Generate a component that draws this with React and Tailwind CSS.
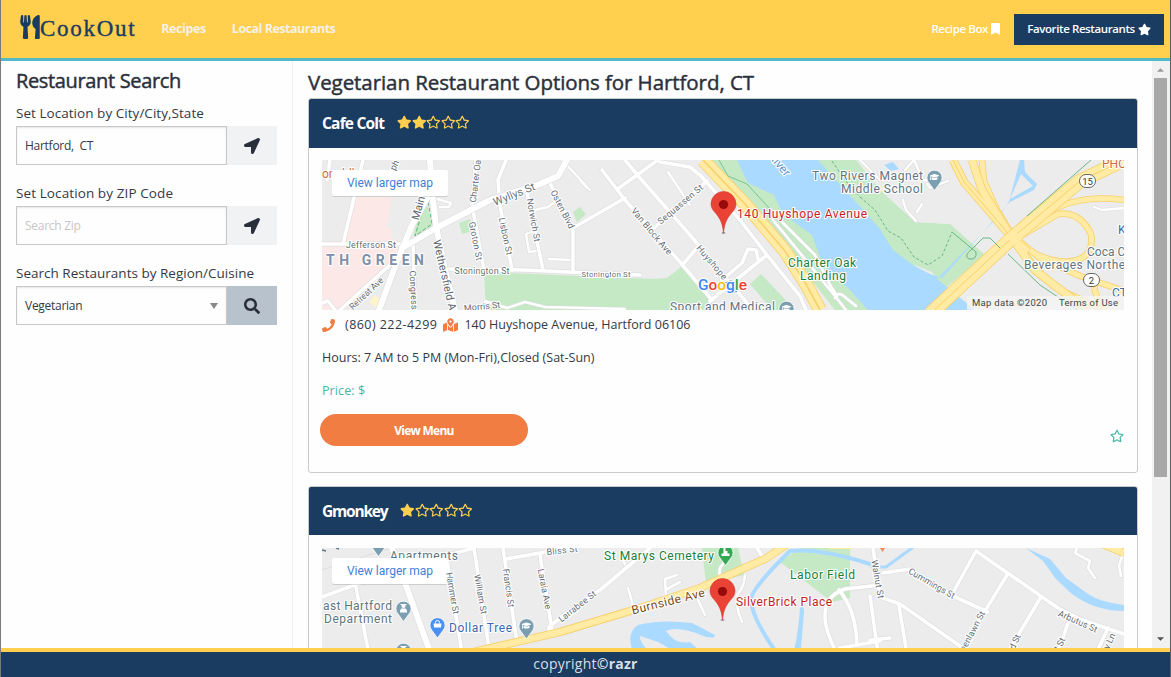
import React from "react";
import {
  FaUtensils, FaBookmark, FaStar, FaRegStar, FaLocationArrow, FaSearch,
  FaPhone, FaMapMarkedAlt, FaGraduationCap,
} from "react-icons/fa";

const W = "#ffffff";

function Roads({ list, width = 4 }) {
  return (
    <g fill="none" strokeLinejoin="round" strokeLinecap="round">
      {list.map((d, i) => <path key={"o" + i} d={d} stroke="#dcdde0" strokeWidth={width + 1.2} />)}
      {list.map((d, i) => <path key={"i" + i} d={d} stroke={W} strokeWidth={width} />)}
    </g>
  );
}

function Highways({ list, width = 6 }) {
  return (
    <g fill="none" strokeLinejoin="round">
      {list.map((d, i) => <path key={"o" + i} d={d} stroke="#f8d06c" strokeWidth={width + 1.6} />)}
      {list.map((d, i) => <path key={"i" + i} d={d} stroke="#ffeba3" strokeWidth={width} />)}
    </g>
  );
}

function Label({ x, y, r = 0, size = 9, fill = "#656d73", w, bold, children, anchor = "middle" }) {
  return (
    <text
      x={x} y={y + 0.5} textAnchor={anchor} fontSize={size} fill={fill}
      fontWeight={bold ? 700 : 400} stroke={W} strokeWidth="2.2" strokeLinejoin="round"
      paintOrder="stroke" textLength={w} transform={`rotate(${r} ${x} ${y})`}
      dominantBaseline="central"
    >
      {children}
    </text>
  );
}

function RedPin({ x, y }) {
  return (
    <g transform={`translate(${x} ${y})`}>
      <ellipse cx="0" cy="0" rx="2" ry="1" fill="#9aa0a6" />
      <path d="M0 0C-1-11-4-15-8-20C-11-23-12.5-26-12.5-29A12.5 12.5 0 0 1 12.5-29C12.5-26 11-23 8-20C4-15 1-11 0 0Z" fill="#ea4335" stroke="#cf3a2d" strokeWidth=".6" />
      <circle cx="0" cy="-28.5" r="4.6" fill="#960a0a" />
    </g>
  );
}

function PlacePin({ x, y, fill = "#7b9eb0", icon }) {
  return (
    <g transform={`translate(${x} ${y})`}>
      <path d="M0 13.5L-5.5 6A7.6 7.6 0 1 1 5.5 6Z" fill={fill} stroke={W} strokeWidth=".8" />
      {icon === "school" && <FaGraduationCap x="-5" y="-5" size={10} color={W} />}
      {icon === "bag" && (
        <g><path d="M-4-1H4L3.5 3H-3.5Z" fill={W} /><path d="M-2-1V-2A2 2 0 0 1 2-2V-1" stroke={W} fill="none" /></g>
      )}
      {icon === "badge" && (
        <g fill={W}><circle cy="-2" r="2.1" /><path d="M-3-4H3V-3H-3ZM-3.6 4.5Q-3.6 0 0 .4Q3.6 0 3.6 4.5Z" /></g>
      )}
      {icon === "grave" && <path d="M-4 4V1.5H-2V-4H0V-1H2V1.5H4V4Z" fill={W} />}
    </g>
  );
}

function HartfordMap() {
  return (
    <svg viewBox="322 160 802 150" className="block h-[150px] w-full" fontFamily="Roboto, sans-serif">
      <rect x="322" y="160" width="802" height="150" fill="#ececec" />
      <path d="M355 197H391L389 218L385 227L392 229V238L400 242L395 262L345 310H322V244H343Z" fill="#fce8e6" />
      <path d="M375 295L383 301L377 309L369 302Z" fill="#fef3c9" />
      <path d="M425 195L432 226L413 237Z" fill="#c5e8c5" />
      <path d="M427 196L432 224L415 236Z" fill="none" stroke="#5bb974" strokeDasharray="4 2" />
      <path d="M459 223L470 219L473 231L462 234ZM573 212L580 207L586 214L577 222Z" fill="#c5e8c5" />
      <path d="M484 272L580 276L656 279L667 278L681 267L710 299L720 310H486Z" fill="#c5e8c5" />
      <path d="M750 284L761 274L795 310H772Z" fill="#c5e8c5" />
      <path d="M706 160H830L856 160L880 190L915 222L950 224L985 255L943 290L932 272L915 265L900 310H835L780 240Z" fill="#c5e8c5" />
      <path d="M868 160L900 207L915 222L950 224L1000 200V160Z" fill="#ececec" />
      <path d="M737 160L748 183L774 195L783 214L812 235L823 265L850 290L868 310H975L953 292L937 279L1000 215L1009 202L1020 160H1024L1025 172L1037 184L1034 190L1010 202L942 278L930 274L913 265L893 250L880 229L866 213L834 178L818 160Z" fill="#aadaff" />
      <path d="M1010 199L1021 174L1033 186Z" fill="#ececec" />
      <path d="M884 165L893 162L899 169L891 171Z" fill="#aadaff" />
      <path d="M860 305L868 310H855Z" fill="#c5e8c5" />
      <Roads width={2.4} list={[
        "M437 199L451 203L449 207H440", "M535 210L548 207L557 200", "M534 231L526 234L529 252L536 251",
        "M549 259L572 260", "M668 172L690 205", "M485 301L507 308L525 302L545 307L625 309",
        "M860 160L880 180", "M905 170L914 160L923 180L938 182", "M948 181L930 188L927 184", "M903 200L906 210L916 221",
        "M922 204L917 212", "M1094 207L1102 210L1124 208", "M562 160L590 190", "M580 180L587 188",
      ]} />
      <Roads width={3.6} list={[
        "M363 160L343 244", "M330 160L327 180", "M322 244H408", "M322 303L328 301L335 310",
        "M476 160L472 205L484 270", "M506 160L498 180L500 205L512 270", "M527 193L543 270",
        "M550 183L573 228V271", "M573 228L625 198", "M447 269L525 270L590 273L640 275",
        "M413 240L415 310", "M391 264L340 310", "M602 170L625 200L680 262L712 300",
        "M619 188L658 160", "M625 160L640 178L690 235L747 303", "M654 228L707 181",
        "M660 162L690 167L701 176L740 220L767 255L800 296L806 310",
        "M767 255L710 301", "M683 264L697 248", "M722 280L742 263L748 249L756 250L758 259",
      ]} />
      <Roads width={2.6} list={[
        "M773 220L800 253L835 296L846 310", "M780 220L815 255L830 285L837 296", "M835 298Q838 290 846 298L856 306",
      ]} />
      <Roads width={6} list={[
        "M430 160L433 200L436 226L445 270L455 310", "M436 182L412 225L396 264L379 310",
        "M402 248L436 228L490 200L540 184L558 176L567 160",
      ]} />
      <path d="M719 160L728 176L747 184L780 220" stroke="#78c590" fill="none" />
      <Highways width={12} list={["M703 160L745 204L785 251L806 284L820 310"]} />
      <path d="M703 160L745 204L785 251L806 284L820 310" stroke="#f8d06c" strokeWidth="1.6" fill="none" />
      <Highways width={5} list={[
        "M982 160L984 181L997 210L1012 235L1035 268L1060 290L1100 308",
        "M1012 241L1058 214Q1080 211 1091 234Q1094 251 1082 258Q1065 267 1035 254",
        "M1012 236L1048 212Q1080 194 1124 200", "M992 258L1018 239", "M1012 235L1040 258L1080 276L1124 291",
        "M1098 276Q1088 287 1105 310",
      ]} />
      <Highways width={7} list={[
        "M953 160L964 182L990 212L1012 238L1035 270L1054 285L1088 310",
        "M972 160L982 190L1012 238L1028 252",
      ]} />
      <Highways width={13} list={["M930 314L1012 238L1080 181L1124 160"]} />
      <path d="M930 314L1012 238L1080 181L1124 160M953 160L964 182L990 212L1012 238" stroke="#f8d06c" fill="none" />
      <path d="M1006 235L1014 230L1023 238L1014 246Z" fill="#ffeba3" />
      <path d="M860 197L875 210L888 231L901 238L914 257L928 265L942 256L952 232" stroke="#69b783" strokeDasharray="3 2" fill="none" />
      <path d="M832 161L845 180L860 197" stroke="#69b783" strokeDasharray="3 2" fill="none" />
      <path d="M952 232L976 252Q977 260 969 259Q963 256 972 249L983 238H990L1000 248M1008 254L1040 285L1055 295L1078 310M1091 160L1027 216" stroke="#69b783" fill="none" />
      <Label x={322} y={173} size={12} fill="#cf6a3e" anchor="start">onaldʼs</Label>
      <rect x="332" y="170" width="116" height="26" rx="2" fill="#00000022" transform="translate(0 1)" />
      <rect x="332" y="170" width="116" height="26" rx="2" fill={W} />
      <text x="347" y="187" fontSize="12" fill="#3f7fd8" textLength="86">View larger map</text>
      <Label x={418} y={208} r={-75} size={11} fill="#5d666d">Main</Label>
      <Label x={394} y={165} r={-65}>ph</Label>
      <Label x={475} y={181} r={-83}>Charter Oa</Label>
      <Label x={514} y={194} r={-22} size={11} fill="#5f7480" w={44}>Wyllys St</Label>
      <Label x={563} y={209} r={63} w={42}>Osten Blvd</Label>
      <Label x={534} y={220} r={80} w={44}>Norwich St</Label>
      <Label x={506} y={236} r={78} w={38}>Lisbon St</Label>
      <Label x={476} y={241} r={79} w={39}>Groton St</Label>
      <Label x={371} y={244} w={50}>Jefferson St</Label>
      <Label x={326} y={259} size={14} bold anchor="start" fill="#7d8fa9" w={98}>TH GREEN</Label>
      <Label x={445} y={275} r={77} size={11} fill="#5d666d" w={72}>Wethersfield A</Label>
      <Label x={482} y={270} w={55}>Stonington St</Label>
      <Label x={606} y={274} size={8} w={49}>Stonington St</Label>
      <Label x={414} y={290} r={87} w={39}>Congress</Label>
      <Label x={366} y={293} r={-43} w={43}>Retreat Ave</Label>
      <Label x={482} y={306} r={-6}>Morris St</Label>
      <Label x={652} y={231} r={50} w={58}>Van Block Ave</Label>
      <Label x={680} y={204} r={-40} w={56}>Sequassen St</Label>
      <Label x={718} y={269} r={50} w={60}>Huyshope Ave</Label>
      <Label x={780} y={164} r={50} size={12} fill="#5c97cc">River</Label>
      <RedPin x={723.5} y={233} />
      <Label x={737} y={213} size={12} fill="#c5221f" anchor="start" w={130}>140 Huyshope Avenue</Label>
      <Label x={812} y={175} size={12} anchor="start" fill="#5f7480" w={111}>Two Rivers Magnet</Label>
      <Label x={841} y={188} size={12} anchor="start" fill="#5f7480" w={82}>Middle School</Label>
      <PlacePin x={934.5} y={177} icon="school" />
      <Label x={788} y={262} size={12} anchor="start" fill="#188038" w={68}>Charter Oak</Label>
      <Label x={800} y={275} size={12} anchor="start" fill="#188038" w={46}>Landing</Label>
      <Label x={670} y={306} size={12} anchor="start" fill="#5f7480" w={105}>Sport and Medical</Label>
      <PlacePin x={786.5} y={308} icon="school" />
      <text x="698" y="290" fontSize="15.5" fontWeight="500" stroke={W} strokeWidth="2" paintOrder="stroke" textLength="49">
        <tspan fill="#4285f4">G</tspan><tspan fill="#ea4335">o</tspan><tspan fill="#fbbc04">o</tspan><tspan fill="#4285f4">g</tspan><tspan fill="#34a853">l</tspan><tspan fill="#ea4335">e</tspan>
      </text>
      <Label x={1102} y={163} size={12} anchor="start" fill="#cf6a3e">PHO</Label>
      <Label x={1118} y={229} size={12} anchor="start" fill="#3b69ae">K</Label>
      <Label x={1087} y={251} size={12} anchor="start" fill="#5f7480">Coca C</Label>
      <Label x={1024} y={264} size={12} anchor="start" fill="#5f7480" w={101}>Beverages Northe</Label>
      <Label x={1112} y={292} size={12} anchor="start" fill="#3b69ae">CT</Label>
      <g fill={W} stroke="#666" strokeWidth="1">
        <rect x="1079.500" y="174.500" width="16" height="13" rx="6.500" />
        <rect x="1083.500" y="273.500" width="16" height="13" rx="6.500" />
      </g>
      <text x="1087.500" y="184.500" fontSize="9.500" textAnchor="middle" fill="#333">15</text>
      <text x="1091.500" y="283.500" fontSize="9.500" textAnchor="middle" fill="#333">2</text>
      <rect x="967" y="296" width="157" height="14" fill="#f5f5f5" fillOpacity=".78" />
      <text x="972" y="306" fontSize="9.500" fill="#444" textLength="75">Map data ©2020</text>
      <text x="1059" y="306" fontSize="9.500" fill="#444" textLength="59">Terms of Use</text>
    </svg>
  );
}

function EastHartfordMap() {
  return (
    <svg viewBox="322 548 802 150" className="block h-[150px] w-full" fontFamily="Roboto, sans-serif">
      <rect x="322" y="548" width="802" height="150" fill="#ececec" />
      <path d="M702 548H738L744 575L706 584ZM780 562L800 548H850V598L832 602Z" fill="#c5e8c5" />
      <path d="M322 570L400 545" stroke="#dcdde0" fill="none" />
      <g fill="none" stroke="#aadaff" strokeLinecap="round">
        <path d="M870 564Q820 548 790 551Q750 590 751 600Q752 620 782 660" strokeWidth="4" />
        <path d="M872 567H886L912 548" strokeWidth="3" />
      </g>
      <path d="M800 608Q804 605 804 612L800 660H791Q798 640 800 608Z" fill="#aadaff" />
      <path d="M637 660Q623 635 638 625Q660 619 692 623L715 635Q714 641 696 633Q675 626 666 631Q675 645 690 642L710 660H690L658 642L640 636Q640 645 654 655V660Z" fill="#aadaff" />
      <path d="M1026 548L1050 559L1066 578L1088 594Q1100 602 1124 605V611Q1095 611 1072 594L1056 579L1043 561Z" fill="#aadaff" />
      <Roads width={2.6} list={[
        "M628 588L633 605", "M677 575L665 579L666 596M667 589L680 582", "M698 600L705 615",
        "M1077 548L1075 553L1090 561L1088 568L1095 578", "M1122 556L1119 566L1121 576",
        "M725 562Q715 570 723 582", "M745 575Q744 588 737 595Q735 605 742 622", "M620 555L626 566",
      ]} />
      <Roads width={3.6} list={[
        "M322 597L360 583L430 560L474 548", "M355 582L370 660", "M447 560L463 660",
        "M474 548L490 655", "M503 548L517 643", "M540 555L552 630", "M506 559L580 546",
        "M549 632V627L560 618L600 590L650 548", "M762 556L757 548", "M873 548L880 597L900 604L980 660",
        "M883 573L910 569L955 597L988 612", "M950 598L976 551L1058 608L1082 620L1124 634",
        "M1007 575L955 660", "M1041 597L1003 660", "M1068 623L1055 660", "M1108 628L1093 660",
        "M899 606L908 660", "M870 596L879 660", "M880 585L845 589Q825 596 825 615Q824 630 840 660",
        "M839 590Q856 610 857 645M840 648L880 641M870 640L890 638",
      ]} />
      <Roads width={6} list={["M392 548L405 583L433 660"]} />
      <Highways width={6.500} list={["M460 655L560 632L600 620L640 608L700 588L740 570L765 559L786 545", "M1100 543L1124 553"]} />
      <Label x={390} y={555} size={12} anchor="start" fill="#5f7480" w={68}>Apartments</Label>
      <PlacePin x={378.5} y={543} />
      <path d="M322 550L326 551M336 548L339 549" stroke="#5f7480" strokeWidth="1.500" />
      <rect x="332" y="559" width="116" height="26" rx="2" fill="#00000022" />
      <rect x="332" y="558" width="116" height="26" rx="2" fill={W} />
      <text x="347" y="575" fontSize="12" fill="#3f7fd8" textLength="86">View larger map</text>
      <Label x={323} y={605} size={12} anchor="start" fill="#5f7480" w={69}>ast Hartford</Label>
      <Label x={324} y={618} size={12} anchor="start" fill="#5f7480" w={68}>Department</Label>
      <PlacePin x={403.500} y={608} icon="badge" />
      <PlacePin x={403.500} y={650} icon="badge" />
      <Label x={453} y={593} r={80} w={42}>Hammer St</Label>
      <Label x={481} y={594} r={80} w={40}>William St</Label>
      <Label x={509} y={588} r={82} w={39}>Francis St</Label>
      <Label x={545} y={589} r={79} w={41}>Laraia Ave</Label>
      <Label x={562} y={550} r={-7} w={31}>Bliss St</Label>
      <Label x={577} y={606} r={-38} w={45}>Larrabee St</Label>
      <PlacePin x={437.500} y={624.500} fill="#4a90f2" icon="bag" />
      <Label x={449} y={627} size={12} anchor="start" fill="#3b69ae" w={63}>Dollar Tree</Label>
      <PlacePin x={526.500} y={625.500} icon="school" />
      <Label x={604} y={555} size={12} anchor="start" fill="#188038" w={110}>St Marys Cemetery</Label>
      <PlacePin x={725.500} y={552} fill="#34a853" icon="grave" />
      <Label x={668} y={601} r={-14} size={12} fill="#7a4b14" w={75}>Burnside Ave</Label>
      <RedPin x={722.500} y={620} />
      <Label x={736} y={601} size={12} fill="#c5221f" anchor="start" w={96}>SilverBrick Place</Label>
      <Label x={790} y={574} size={12} fill="#188038" anchor="start" w={65}>Labor Field</Label>
      <path d="M829 548H852" stroke="#ffeba3" strokeWidth="2" />
      <path d="M880 548H885L882.500 552Z" fill="#f58c55" />
      <Label x={878} y={579} r={80} w={39}>Walnut St</Label>
      <Label x={932} y={583} r={30} w={52}>Cummings St</Label>
      <Label x={972} y={631} r={-62} w={44}>eenlawn St</Label>
      <Label x={1014} y={643} r={-65}>rd St</Label>
      <Label x={1059} y={645} r={-65}>d St</Label>
      <Label x={1109} y={641} r={-65}>y Ln</Label>
      <Label x={1078} y={621} r={24} w={42}>Arbutus St</Label>
    </svg>
  );
}

function Rating({ value }) {
  return (
    <span className="mb-0.5 flex text-[#ffcf4d]">
      {[1, 2, 3, 4, 5].map((n) =>
        n <= value ? <FaStar key={n} className="h-[14.5px] w-[14.5px]" /> : <FaRegStar key={n} className="h-[14.5px] w-[14.5px]" />
      )}
    </span>
  );
}

function Field({ label, labelClass, children, icon, buttonClass }) {
  return (
    <div className="h-20">
      <label className={"block h-[23px] pt-0.5 text-[13.5px] leading-[17px] whitespace-nowrap " + labelClass}>{label}</label>
      <div className="flex h-[39px]">
        <div className="flex w-[211px] items-center border border-[#c8c8c8] bg-[#fefefe] px-2 pt-px text-[12px] tracking-[-0.27px] shadow-[inset_0_1px_2px_rgba(10,10,10,0.1)]">
          {children}
        </div>
        <button className={"flex w-[50px] items-center justify-center text-[16px] " + buttonClass}>{icon}</button>
      </div>
    </div>
  );
}

export default function App() {
  return (
    <div className="flex h-[677px] w-[1171px] flex-col overflow-hidden border-r border-l border-r-[#5b5e66] border-l-[#777b80] bg-[#fefefe] font-['Open_Sans',sans-serif] text-[#343a45]">
      <header className="flex h-[61px] shrink-0 items-center border-b-[3px] border-[#51b9c8] bg-[#ffcf4d] pr-[6px] pl-[19px]">
        <div className="flex items-center text-[#1a3c61]">
          <FaUtensils className="mb-1 h-6 w-5" />
          <span className="-mt-px font-['Liberation_Serif',serif] text-[23px] leading-none font-normal tracking-[1.7px] [-webkit-text-stroke:0.4px]">CookOut</span>
        </div>
        <nav className="ml-[25px] flex gap-[26px] text-[12.5px] font-bold tracking-[-0.4px] whitespace-nowrap text-[#f4f1ea]">
          <a>Recipes</a>
          <a className="tracking-[-0.5px]">Local Restaurants</a>
        </nav>
        <div className="ml-auto flex items-center text-[11.5px] font-semibold tracking-[-0.4px] whitespace-nowrap text-white">
          <a className="flex items-center gap-0.5">Recipe Box<FaBookmark className="h-3 w-[11px]" /></a>
          <a className="ml-[13px] flex h-[31px] w-[150px] items-center justify-center gap-[3px] bg-[#1a3c61]">Favorite Restaurants<FaStar className="h-[13px] w-[13px]" /></a>
        </div>
      </header>

      <div className="flex min-h-0 flex-1">
        <aside className="w-[292px] shrink-0 border-r border-[#eeeff1] pt-[7px] pl-[15px]">
          <h2 className="h-[35px] text-[20px] leading-[26px] tracking-[-0.35px] text-[#2a303b] [-webkit-text-stroke:0.45px]">Restaurant Search</h2>
          <Field label="Set Location by City/City,State" labelClass="tracking-[0.04px]" icon={<FaLocationArrow />} buttonClass="bg-[#f1f2f4] text-[#2a303b]">
            <span className="whitespace-pre">Hartford,  CT</span>
          </Field>
          <Field label="Set Location by ZIP Code" labelClass="tracking-[0.1px]" icon={<FaLocationArrow />} buttonClass="bg-[#f1f2f4] text-[#2a303b]">
            <span className="text-[#c6c6c6]">Search Zip</span>
          </Field>
          <Field label="Search Restaurants by Region/Cuisine" labelClass="tracking-[0.01px]" icon={<FaSearch />} buttonClass="bg-[#b8c2cd] text-[#2a303b]">
            <span className="flex-1">Vegetarian</span>
            <svg viewBox="0 0 8 6" className="h-[6px] w-2"><path d="M0 0H8L4 6Z" fill="#888" /></svg>
          </Field>
        </aside>

        <main className="min-w-0 flex-1 overflow-hidden pt-[8px] pr-[14px] pl-[15px]">
          <h2 className="h-[29px] text-[20.5px] leading-[27px] tracking-[-0.07px] whitespace-nowrap text-[#2a303b] [-webkit-text-stroke:0.45px]">Vegetarian Restaurant Options for Hartford, CT</h2>
          <section className="h-[375px] overflow-hidden rounded-[3px] border border-[#cacaca]">
            <div className="flex h-[49px] items-center gap-[13px] bg-[#1a3c61] pl-[13px]">
              <h3 className="text-[15.5px] font-bold tracking-[-0.8px] text-white">Cafe Colt</h3>
              <Rating value={2} />
            </div>
            <div className="px-[13px] pt-3">
              <HartfordMap />
              <div className="flex h-[29px] items-center pt-px text-[12.5px] whitespace-nowrap">
                <FaPhone className="h-[13px] w-[13px] text-[#f17d42]" />
                <span className="ml-[10px] tracking-[0.45px]">(860) 222-4299</span>
                <FaMapMarkedAlt className="mx-[6px] h-[14px] w-[15px] text-[#f17d42]" />
                <span>140 Huyshope Avenue, Hartford 06106</span>
              </div>
              <p className="mt-1 h-[29px] text-[12.5px] leading-[29px]">Hours: 7 AM to 5 PM (Mon-Fri),Closed (Sat-Sun)</p>
              <p className="mt-1 h-[29px] text-[12.5px] leading-[29px] tracking-[0.1px] text-[#44b8a5]">Price: $</p>
              <div className="flex items-end justify-between pt-[9px]">
                <button className="-ml-0.5 h-8 w-[208px] rounded-full bg-[#f17d42] pt-0.5 text-[12px] font-bold tracking-[-0.75px] text-white">View Menu</button>
                <FaRegStar className="mb-[3px] h-[14px] w-[14px] text-[#44b8a5]" />
              </div>
            </div>
          </section>
          <section className="mt-[13px] h-[375px] overflow-hidden rounded-[3px] border border-[#cacaca]">
            <div className="flex h-12 items-center gap-[13px] bg-[#1a3c61] pl-[13px]">
              <h3 className="pt-0.5 text-[15.5px] font-bold tracking-[-1.2px] text-white">Gmonkey</h3>
              <Rating value={1} />
            </div>
            <div className="px-[13px] pt-[13px]">
              <EastHartfordMap />
            </div>
          </section>
        </main>

        <div className="flex w-[18px] shrink-0 flex-col items-center bg-[#f1f1f1] pr-px">
          <span className="flex h-[17px] items-center"><svg viewBox="0 0 8 4" className="h-1 w-[7px]"><path d="M4 0L8 4H0Z" fill="#999" /></svg></span>
          <span className="h-[399px] w-[13px] bg-[#a8a8a8]" />
          <span className="mt-auto flex h-[18px] items-center"><svg viewBox="0 0 8 4" className="h-1 w-[7px]"><path d="M0 0H8L4 4Z" fill="#505050" /></svg></span>
        </div>
      </div>

      <footer className="flex h-[29px] shrink-0 items-center justify-center border-t-4 border-[#ffcf4d] bg-[#1a3c61] pb-0.5 text-[14px] tracking-[0.25px] text-[#d9dfe5]">
        <span>copyright<b>©razr</b></span>
      </footer>
    </div>
  );
}
